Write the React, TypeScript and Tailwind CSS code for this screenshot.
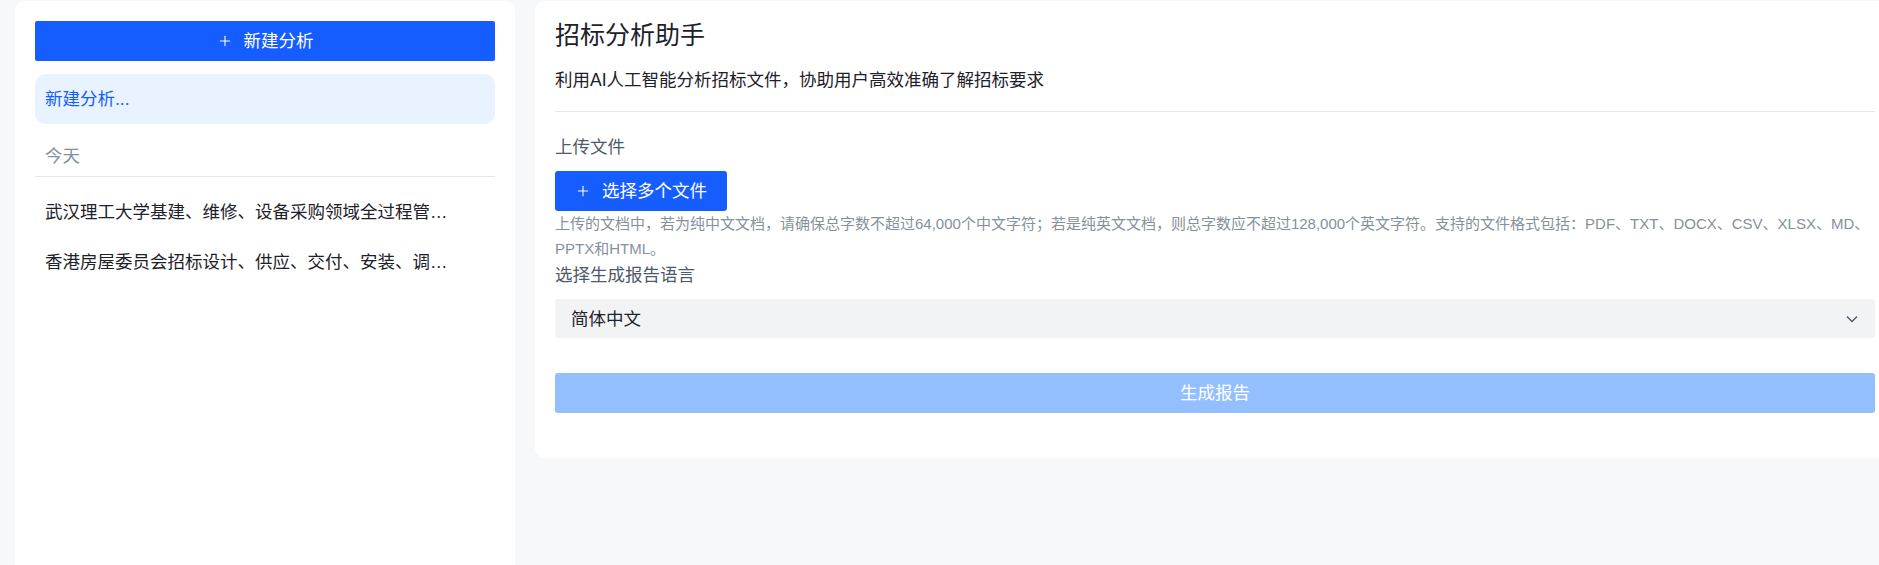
import React, { useState } from 'react';
import { Plus } from 'lucide-react';

const history = [
    '武汉理工大学基建、维修、设备采购领域全过程管理咨询服务招标文件',
    '香港房屋委员会招标设计、供应、交付、安装、调试及维护智能电表系统',
];

const ChevronDown = () => (
    <svg width="12" height="8" viewBox="0 0 12 8" fill="none" className="text-[#4e5969]">
        <path d="M1 1.5 6 6.5 11 1.5" stroke="currentColor" strokeWidth="1.4" />
    </svg>
);

const Sidebar: React.FC = () => (
    <aside className="w-[500px] shrink-0 rounded-t-[10px] bg-white px-5 pt-5">
        <button className="flex h-10 w-full items-center justify-center rounded-[2px] bg-[#165dff] text-white">
            <Plus size={16} strokeWidth={1.6} className="mr-[11px]" />
            <span className="leading-[26px]">新建分析</span>
        </button>

        <div className="mt-[13px] flex h-[50px] items-center rounded-[10px] bg-[#e8f3ff] px-[10px] text-[#165dff]">
            新建分析...
        </div>

        <div className="mt-5 border-b border-[#e5e6eb] px-[10px] pb-[7px] leading-[25px] text-[#86909c]">
            今天
        </div>

        <ul className="pt-[10px]">
            {history.map((title) => (
                <li key={title} className="flex h-[50px] items-center px-[10px] text-[#1d2129]">
                    <span className="block w-[410px] truncate leading-[26px]">{title}</span>
                </li>
            ))}
        </ul>
    </aside>
);

export default function App() {
    const [lang] = useState('简体中文');

    return (
        <div className="flex h-[565px] w-full gap-5 overflow-hidden bg-[#f7f8fa] pl-[15px] pt-px font-['Liberation_Sans','Noto_Sans_CJK_SC',sans-serif] text-[17.5px]">
            <Sidebar />

            <main className="flex-1 self-start rounded-l-[10px] bg-white pb-[45px] pl-5 pr-1 pt-5">
                <h1 className="text-[25px] leading-[28px] text-[#1d2129]">招标分析助手</h1>
                <p className="mt-[18px] leading-[26px] text-[#1d2129]">
                    利用AI人工智能分析招标文件，协助用户高效准确了解招标要求
                </p>
                <div className="mt-[18px] border-t border-[#e5e6eb]" />

                <div className="mt-[22px] leading-[26px] text-[#4e5969]">上传文件</div>
                <button className="mt-[11px] flex h-10 items-center rounded-[3px] bg-[#165dff] px-5 text-white">
                    <Plus size={16} strokeWidth={1.6} className="mr-[11px]" />
                    <span className="leading-[26px]">选择多个文件</span>
                </button>
                <p className="text-[15px] leading-[25px] text-[#86909c]">
                    上传的文档中，若为纯中文文档，请确保总字数不超过64,000个中文字符；若是纯英文文档，则总字数应不超过128,000个英文字符。支持的文件格式包括：PDF、TXT、DOCX、CSV、XLSX、MD、PPTX和HTML。
                </p>

                <div className="mt-px leading-[26px] text-[#4e5969]">选择生成报告语言</div>
                <div className="mt-[11px] flex h-[39px] items-center justify-between rounded-[3px] bg-[#f2f3f5] pl-4 pr-[17px]">
                    <span className="leading-[26px] text-[#1d2129]">{lang}</span>
                    <ChevronDown />
                </div>

                <button
                    disabled
                    className="mt-[35px] flex h-10 w-full items-center justify-center rounded-[3px] bg-[#94bfff] text-white"
                >
                    生成报告
                </button>
            </main>
        </div>
    );
}
